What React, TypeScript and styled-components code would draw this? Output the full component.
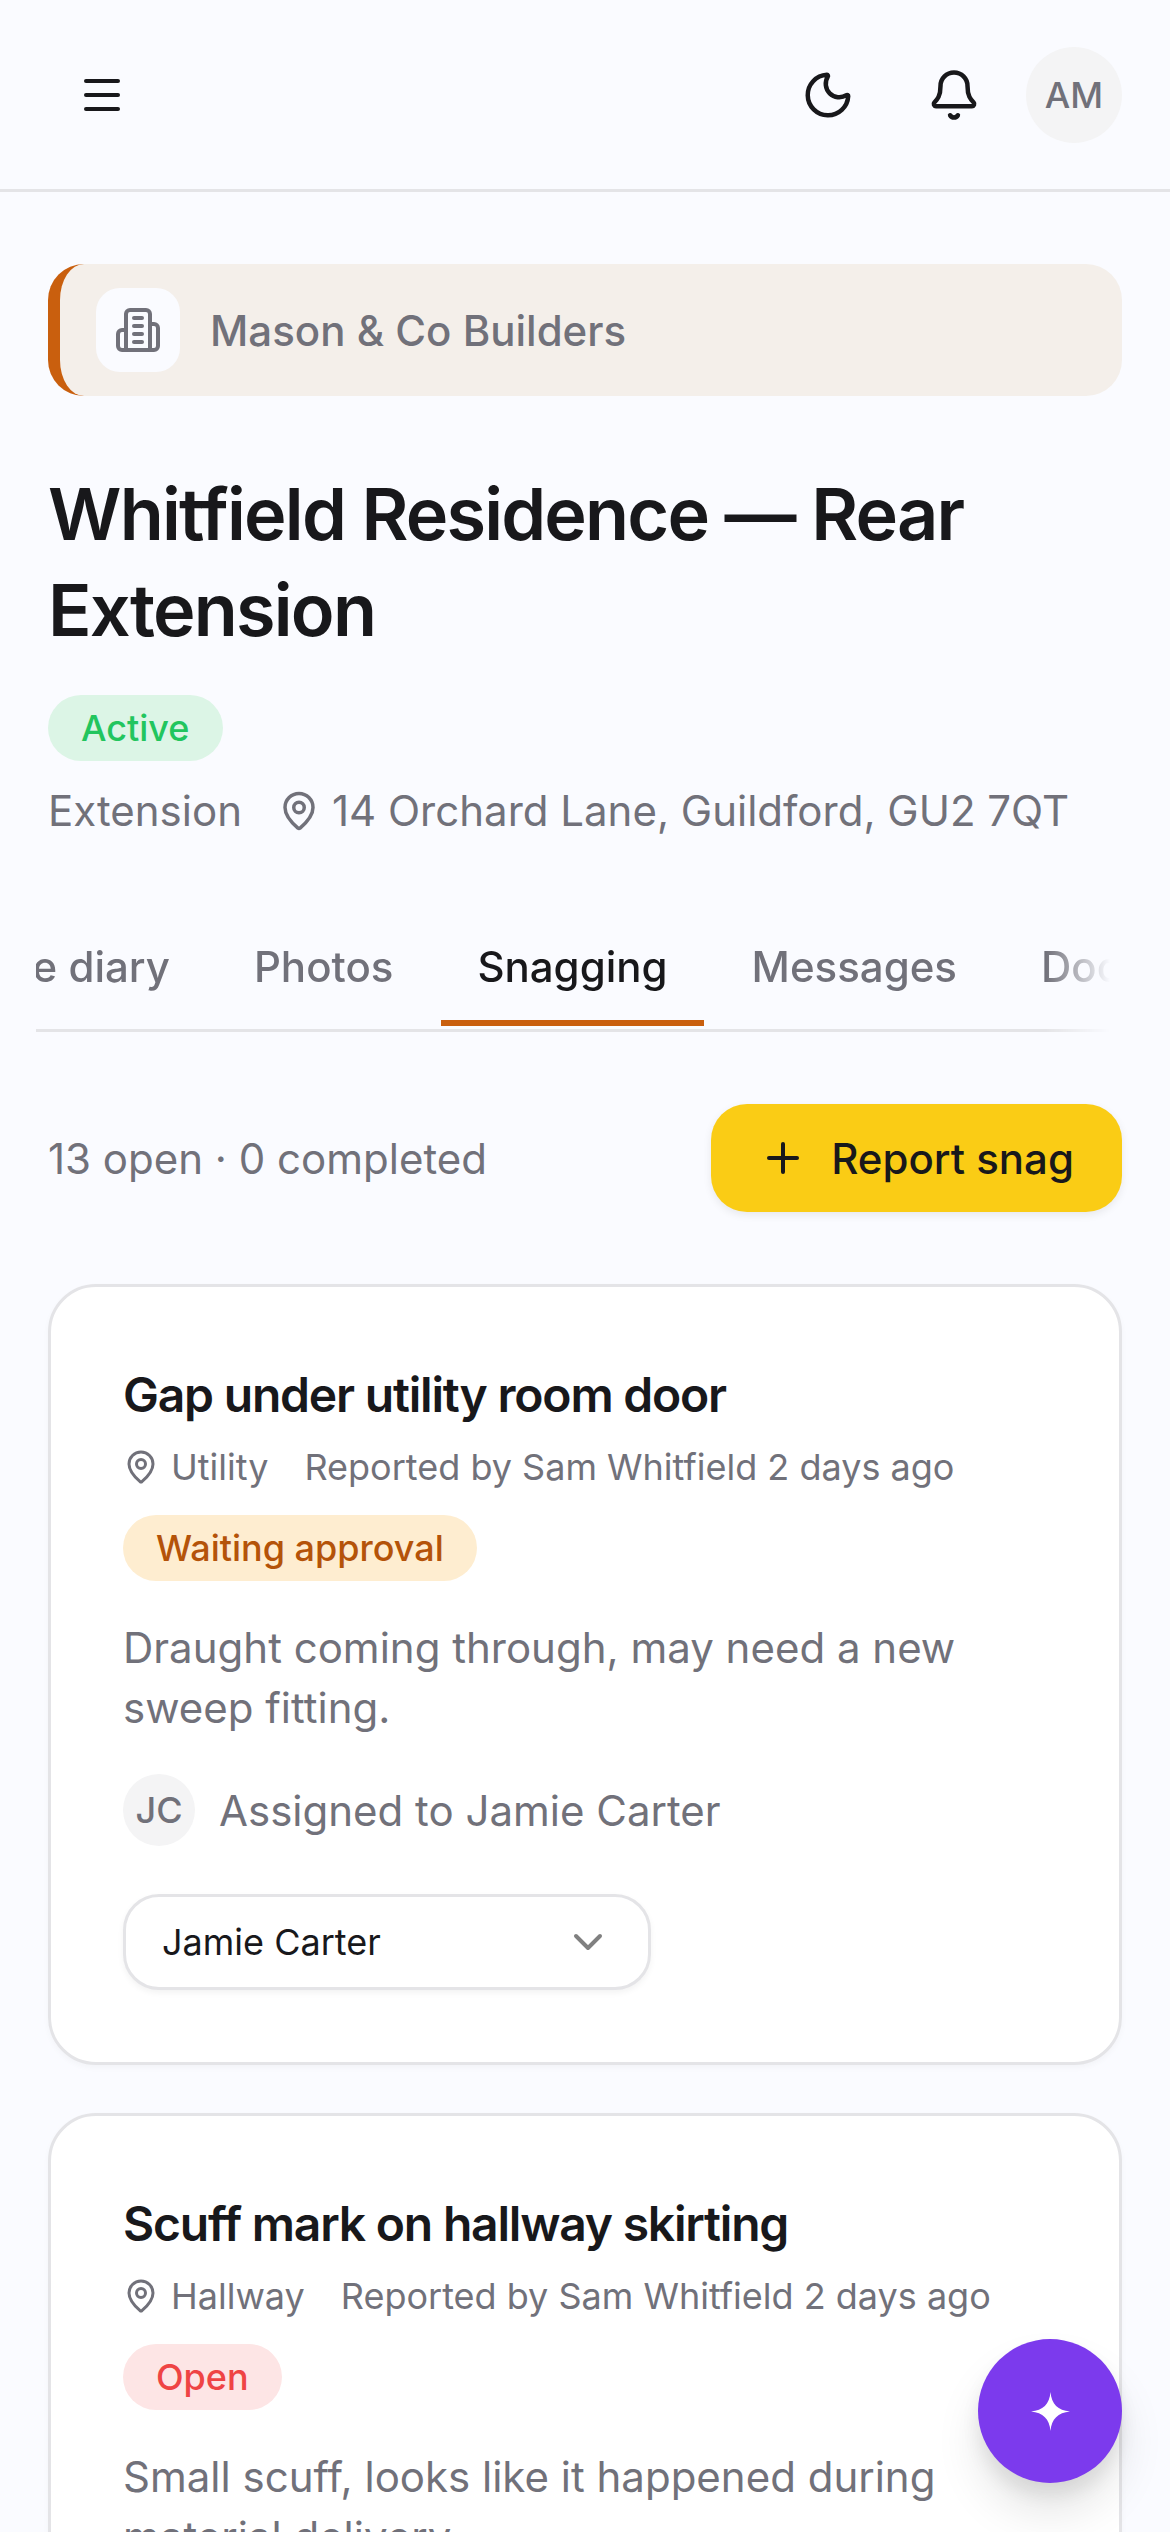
import React from 'react'
import styled, { createGlobalStyle } from 'styled-components'
import { Bell, ChevronDown, MapPin, Menu, Moon, Plus } from 'lucide-react'

const COLORS = {
  bg: '#fafbff',
  ink: '#18181b',
  muted: '#71717a',
  line: '#e4e4e7',
  orange: '#c95f0e',
  soft: '#f4f4f5',
}

const GlobalStyle = createGlobalStyle`
  * { box-sizing: border-box; }
  html, body {
    margin: 0;
    height: 2532px;
    overflow: hidden;
    background: ${COLORS.bg};
    font-family: Inter, "Liberation Sans", sans-serif;
    color: ${COLORS.ink};
  }
`

const Page = styled.div`
  position: relative;
  width: 1170px;
  height: 2532px;
  overflow: hidden;
`

const Header = styled.header`
  height: 192px;
  padding: 0 48px;
  display: flex;
  align-items: center;
  justify-content: space-between;
  border-bottom: 3px solid ${COLORS.line};
`

const IconButton = styled.button`
  width: 108px;
  height: 108px;
  padding: 0;
  border: 0;
  background: none;
  color: ${COLORS.ink};
  display: flex;
  align-items: center;
  justify-content: center;
`

const HeaderRight = styled.div`
  display: flex;
  align-items: center;
  gap: 18px;
`

const Avatar = styled.div<{ size: number; fontSize: number }>`
  width: ${({ size }) => size}px;
  height: ${({ size }) => size}px;
  border-radius: 50%;
  background: ${COLORS.soft};
  color: ${COLORS.muted};
  font-size: ${({ fontSize }) => fontSize}px;
  font-weight: 500;
  display: flex;
  align-items: center;
  justify-content: center;
  flex-shrink: 0;
`

const Main = styled.main`
  padding: 72px 48px 0;
`

const CompanyBanner = styled.div`
  height: 132px;
  padding: 0 36px;
  display: flex;
  align-items: center;
  gap: 30px;
  background: #f4efea;
  border-left: 12px solid ${COLORS.orange};
  border-radius: 36px;
  color: ${COLORS.muted};
  font-size: 42px;
  font-weight: 500;
`

const CompanyIcon = styled.div`
  width: 84px;
  height: 84px;
  border-radius: 24px;
  background: ${COLORS.bg};
  display: flex;
  align-items: center;
  justify-content: center;
`

const Title = styled.h1`
  margin: 70px 0 0;
  font-size: 72px;
  line-height: 96px;
  font-weight: 600;
  letter-spacing: -1.8px;
`

const Pill = styled.span<{ bg: string; fg: string }>`
  display: inline-flex;
  align-items: center;
  height: 66px;
  padding: 0 33px;
  border-radius: 33px;
  background: ${({ bg }) => bg};
  color: ${({ fg }) => fg};
  font-size: 36px;
  font-weight: 500;
`

const ActivePill = styled(Pill)`
  margin-top: 37px;
`

const MetaRow = styled.div`
  margin-top: 20px;
  display: flex;
  align-items: center;
  gap: 36px;
  color: ${COLORS.muted};
  font-size: 42px;
  line-height: 60px;
`

const MetaItem = styled.span`
  display: inline-flex;
  align-items: center;
  gap: 12px;
`

const TabBar = styled.nav`
  margin: 77px 0 0 -12px;
  width: 1074px;
  overflow: hidden;
  padding-bottom: 3px;
  border-bottom: 3px solid ${COLORS.line};
  mask-image: linear-gradient(to right, #000 94%, transparent 100%);
`

const TabTrack = styled.div`
  display: flex;
  gap: 12px;
  margin-left: -91px;
  width: max-content;
`

const Tab = styled.div<{ active?: boolean }>`
  height: 108px;
  padding: 0 36px 6px;
  display: flex;
  align-items: center;
  font-size: 42px;
  font-weight: 500;
  white-space: nowrap;
  color: ${({ active }) => (active ? COLORS.ink : COLORS.muted)};
  border-bottom: 6px solid ${({ active }) => (active ? COLORS.orange : 'transparent')};
`

const SummaryRow = styled.div`
  margin-top: 72px;
  display: flex;
  align-items: center;
  justify-content: space-between;
  color: ${COLORS.muted};
  font-size: 42px;
`

const ReportButton = styled.button`
  height: 108px;
  padding: 0 48px;
  display: flex;
  align-items: center;
  gap: 24px;
  border: 0;
  border-radius: 36px;
  background: #facc15;
  color: ${COLORS.ink};
  font-family: inherit;
  font-size: 42px;
  font-weight: 500;
  box-shadow: 0 3px 9px rgba(0, 0, 0, 0.08);
`

const CardList = styled.div`
  margin-top: 72px;
  display: flex;
  flex-direction: column;
  gap: 48px;
`

const Card = styled.article`
  padding: 72px 72px 72px;
  background: #fff;
  border: 3px solid ${COLORS.line};
  border-radius: 48px;
  box-shadow: 0 3px 6px rgba(0, 0, 0, 0.03);
`

const CardTitle = styled.h2`
  margin: 0;
  font-size: 48px;
  line-height: 72px;
  font-weight: 600;
  letter-spacing: -1.2px;
`

const CardMeta = styled.div`
  margin-top: 9px;
  display: flex;
  align-items: center;
  gap: 36px;
  color: ${COLORS.muted};
  font-size: 36px;
  line-height: 54px;
`

const StatusRow = styled.div`
  margin-top: 21px;
  display: flex;
`

const Description = styled.p`
  margin: 37px 0 0;
  color: ${COLORS.muted};
  font-size: 42px;
  line-height: 60px;
`

const AssignRow = styled.div`
  margin-top: 36px;
  display: flex;
  align-items: center;
  gap: 24px;
  color: ${COLORS.muted};
  font-size: 42px;
`

const Select = styled.div`
  margin-top: 48px;
  width: 528px;
  height: 96px;
  padding: 0 36px;
  display: flex;
  align-items: center;
  justify-content: space-between;
  background: #fff;
  border: 3px solid ${COLORS.line};
  border-radius: 36px;
  color: ${COLORS.ink};
  font-size: 36px;
  box-shadow: 0 3px 6px rgba(0, 0, 0, 0.05);
`

const AssistantButton = styled.button`
  position: absolute;
  left: 978px;
  top: 2339px;
  width: 144px;
  height: 144px;
  padding: 0;
  border: 0;
  border-radius: 50%;
  background: #7c3aed;
  display: flex;
  align-items: center;
  justify-content: center;
  box-shadow: 0 30px 45px rgba(0, 0, 0, 0.1), 0 12px 18px rgba(0, 0, 0, 0.08);
`

const Sparkle = () => (
  <svg width="39" height="39" viewBox="0 0 39 39" fill="#fff">
    <path d="M19.5 0C20.5 12 27 18.5 39 19.5C27 20.5 20.5 27 19.5 39C18.5 27 12 20.5 0 19.5C12 18.5 18.5 12 19.5 0Z" />
  </svg>
)

const BuildingIcon = () => (
  <svg
    width="48"
    height="48"
    viewBox="0 0 24 24"
    fill="none"
    stroke={COLORS.muted}
    strokeWidth="2"
    strokeLinecap="round"
    strokeLinejoin="round"
  >
    <path d="M6 22V4a2 2 0 0 1 2-2h8a2 2 0 0 1 2 2v18Z" />
    <path d="M6 12H4a2 2 0 0 0-2 2v6a2 2 0 0 0 2 2h2" />
    <path d="M18 9h2a2 2 0 0 1 2 2v9a2 2 0 0 1-2 2h-2" />
    <path d="M10 6h4" />
    <path d="M10 10h4" />
    <path d="M10 14h4" />
    <path d="M10 18h4" />
  </svg>
)

type Snag = {
  title: string
  location: string
  status: string
  statusBg: string
  statusFg: string
  description: string
  assignee?: string
  initials?: string
}

const SNAGS: Snag[] = [
  {
    title: 'Gap under utility room door',
    location: 'Utility',
    status: 'Waiting approval',
    statusBg: '#feedd0',
    statusFg: '#b45309',
    description: 'Draught coming through, may need a new sweep fitting.',
    assignee: 'Jamie Carter',
    initials: 'JC',
  },
  {
    title: 'Scuff mark on hallway skirting',
    location: 'Hallway',
    status: 'Open',
    statusBg: '#fde5e5',
    statusFg: '#ef4444',
    description: 'Small scuff, looks like it happened during material delivery.',
  },
]

const TABS = ['Site diary', 'Photos', 'Snagging', 'Messages', 'Documents']

const App = () => {
  return (
    <Page>
      <GlobalStyle />
      <Header>
        <IconButton>
          <Menu size={48} strokeWidth={2} />
        </IconButton>
        <HeaderRight>
          <IconButton>
            <Moon size={54} strokeWidth={2} />
          </IconButton>
          <IconButton>
            <Bell size={54} strokeWidth={2} />
          </IconButton>
          <Avatar size={96} fontSize={36}>
            AM
          </Avatar>
        </HeaderRight>
      </Header>
      <Main>
        <CompanyBanner>
          <CompanyIcon>
            <BuildingIcon />
          </CompanyIcon>
          Mason &amp; Co Builders
        </CompanyBanner>
        <Title>Whitfield Residence — Rear Extension</Title>
        <ActivePill bg="#dcf5e6" fg="#22c55e">
          Active
        </ActivePill>
        <MetaRow>
          <span>Extension</span>
          <MetaItem>
            <MapPin size={42} strokeWidth={2} />
            14 Orchard Lane, Guildford, GU2 7QT
          </MetaItem>
        </MetaRow>
        <TabBar>
          <TabTrack>
            {TABS.map((tab) => (
              <Tab key={tab} active={tab === 'Snagging'}>
                {tab}
              </Tab>
            ))}
          </TabTrack>
        </TabBar>
        <SummaryRow>
          <span>13 open · 0 completed</span>
          <ReportButton>
            <Plus size={48} strokeWidth={2} />
            Report snag
          </ReportButton>
        </SummaryRow>
        <CardList>
          {SNAGS.map((snag) => (
            <Card key={snag.title}>
              <CardTitle>{snag.title}</CardTitle>
              <CardMeta>
                <MetaItem>
                  <MapPin size={36} strokeWidth={2} />
                  {snag.location}
                </MetaItem>
                <span>Reported by Sam Whitfield 2 days ago</span>
              </CardMeta>
              <StatusRow>
                <Pill bg={snag.statusBg} fg={snag.statusFg}>
                  {snag.status}
                </Pill>
              </StatusRow>
              <Description>{snag.description}</Description>
              {snag.assignee && (
                <>
                  <AssignRow>
                    <Avatar size={72} fontSize={36}>
                      {snag.initials}
                    </Avatar>
                    Assigned to {snag.assignee}
                  </AssignRow>
                  <Select>
                    {snag.assignee}
                    <ChevronDown size={48} strokeWidth={2} color="#808080" />
                  </Select>
                </>
              )}
            </Card>
          ))}
        </CardList>
      </Main>
      <AssistantButton>
        <Sparkle />
      </AssistantButton>
    </Page>
  )
}

export default App
